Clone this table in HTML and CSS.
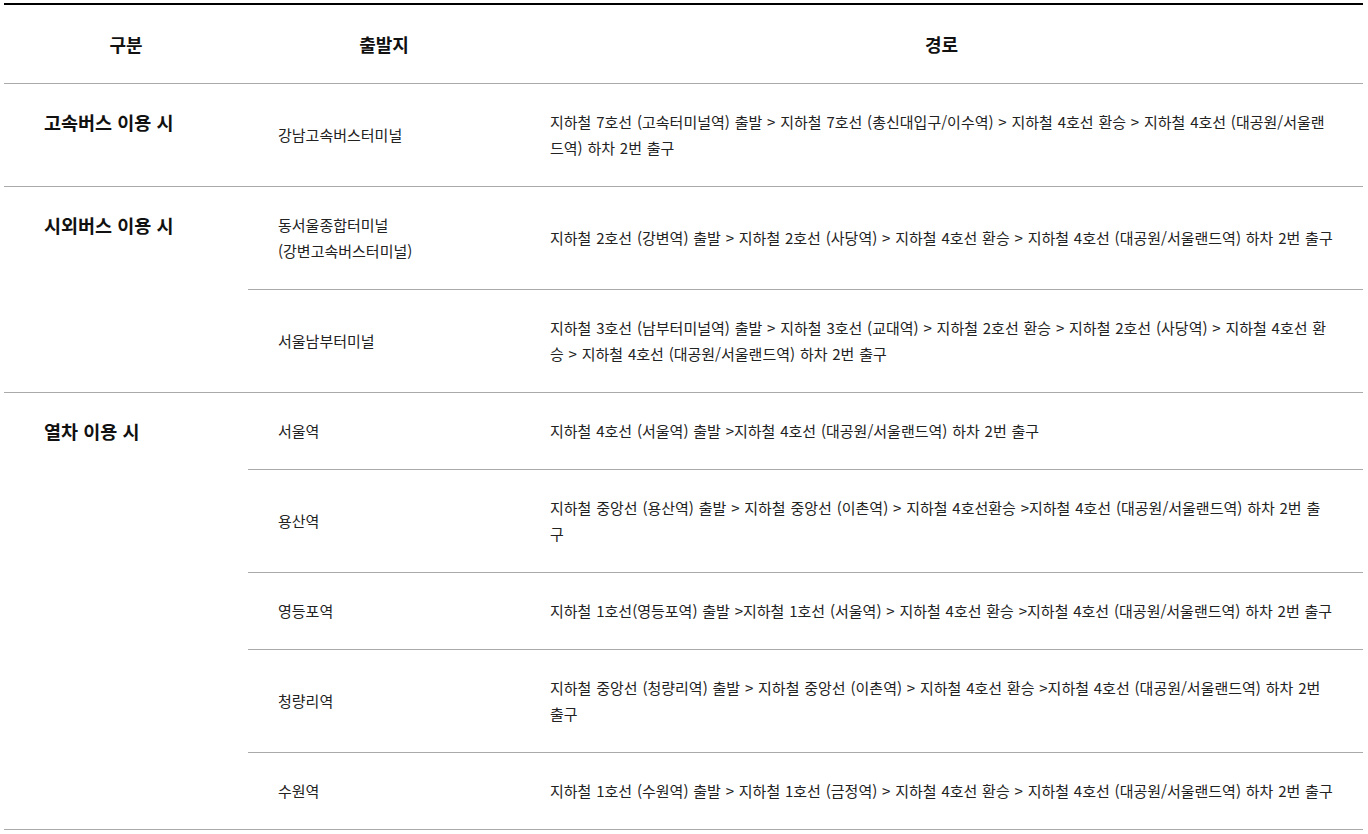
FILE: index.html
```html
<!DOCTYPE html>
<html lang="ko">
<head>
<meta charset="utf-8">
<link rel="stylesheet" href="styles.css">
</head>
<body>
<div class="wrap">
<table class="route">
  <colgroup>
    <col class="c1"><col class="c2"><col class="c3">
  </colgroup>
  <thead>
    <tr><th>구분</th><th>출발지</th><th>경로</th></tr>
  </thead>
  <tbody>
    <tr class="grp">
      <td class="kind">고속버스 이용 시</td>
      <td>강남고속버스터미널</td>
      <td>지하철 7호선 (고속터미널역) 출발 &gt; 지하철 7호선 (총신대입구/이수역) &gt; 지하철 4호선 환승 &gt; 지하철 4호선 (대공원/서울랜드역) 하차 2번 출구</td>
    </tr>
    <tr class="grp">
      <td class="kind" rowspan="2">시외버스 이용 시</td>
      <td>동서울종합터미널<br>(강변고속버스터미널)</td>
      <td>지하철 2호선 (강변역) 출발 &gt; 지하철 2호선 (사당역) &gt; 지하철 4호선 환승 &gt; 지하철 4호선 (대공원/서울랜드역) 하차 2번 출구</td>
    </tr>
    <tr>
      <td>서울남부터미널</td>
      <td>지하철 3호선 (남부터미널역) 출발 &gt; 지하철 3호선 (교대역) &gt; 지하철 2호선 환승 &gt; 지하철 2호선 (사당역) &gt; 지하철 4호선 환승 &gt; 지하철 4호선 (대공원/서울랜드역) 하차 2번 출구</td>
    </tr>
    <tr class="grp">
      <td class="kind" rowspan="5">열차 이용 시</td>
      <td>서울역</td>
      <td>지하철 4호선 (서울역) 출발 &gt;지하철 4호선 (대공원/서울랜드역) 하차 2번 출구</td>
    </tr>
    <tr>
      <td>용산역</td>
      <td>지하철 중앙선 (용산역) 출발 &gt; 지하철 중앙선 (이촌역) &gt; 지하철 4호선환승 &gt;지하철 4호선 (대공원/서울랜드역) 하차 2번 출구</td>
    </tr>
    <tr>
      <td>영등포역</td>
      <td>지하철 1호선(영등포역) 출발 &gt;지하철 1호선 (서울역) &gt; 지하철 4호선 환승 &gt;지하철 4호선 (대공원/서울랜드역) 하차 2번 출구</td>
    </tr>
    <tr>
      <td>청량리역</td>
      <td>지하철 중앙선 (청량리역) 출발 &gt; 지하철 중앙선 (이촌역) &gt; 지하철 4호선 환승 &gt;지하철 4호선 (대공원/서울랜드역) 하차 2번 출구</td>
    </tr>
    <tr>
      <td>수원역</td>
      <td>지하철 1호선 (수원역) 출발 &gt; 지하철 1호선 (금정역) &gt; 지하철 4호선 환승 &gt; 지하철 4호선 (대공원/서울랜드역) 하차 2번 출구</td>
    </tr>
  </tbody>
</table>
</div>
</body>
</html>
```

FILE: styles.css
```css
html, body {
  margin: 0;
  padding: 0;
  background: #fff;
}
body {
  font-family: "Noto Sans CJK KR", "Noto Sans", sans-serif;
  color: #222;
}
.wrap {
  padding: 3px 5px 0 4px;
}
.route {
  width: 100%;
  border-collapse: collapse;
  border-top: 2px solid #000;
  table-layout: fixed;
}
.c1 { width: 244px; }
.c2 { width: 272px; }
.route th {
  height: 78px;
  padding: 0;
  font-size: 18px;
  font-weight: 700;
  color: #111;
  text-align: center;
  vertical-align: middle;
  border-bottom: 1px solid #aaa;
}
.route td {
  padding: 25px 30px;
  font-size: 15px;
  line-height: 26px;
  word-spacing: 0.6px;
  text-align: left;
  vertical-align: middle;
  border-bottom: 1px solid #aaa;
}
.route td.kind {
  padding-left: 40px;
  font-size: 18.5px;
  font-weight: 700;
  word-spacing: 0;
  color: #111;
  vertical-align: top;
}
```
